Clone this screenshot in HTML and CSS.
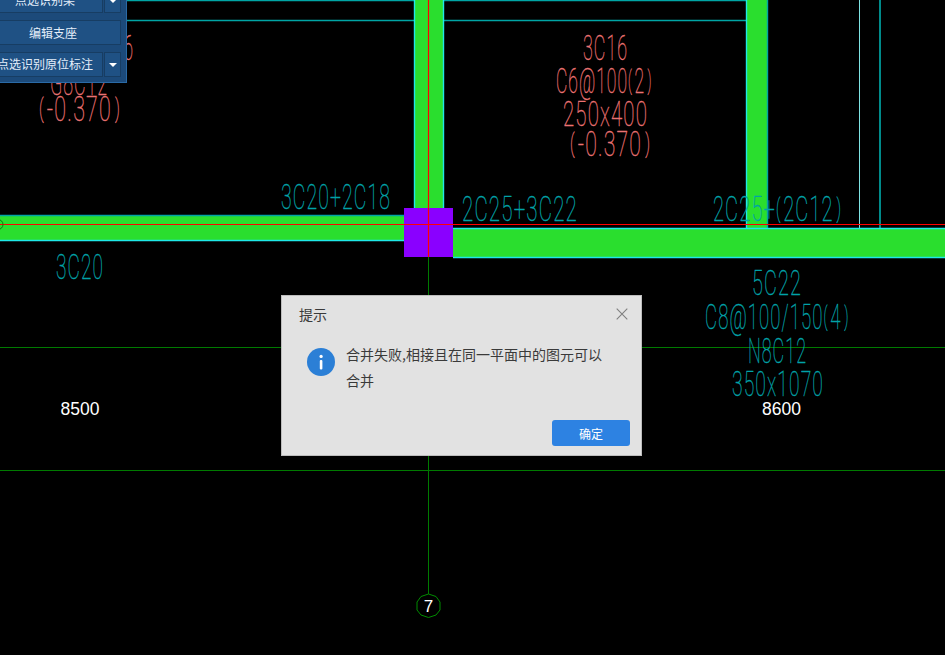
FILE: index.html
```html
<!DOCTYPE html>
<html lang="zh">
<head>
<meta charset="utf-8">
<title>提示</title>
<link rel="stylesheet" href="styles.css">
</head>
<body>
<main class="viewport">
  <svg class="cad" width="945" height="655" viewBox="0 0 945 655" xmlns="http://www.w3.org/2000/svg">
    <!-- axis lines -->
    <g class="axis">
      <line x1="0" y1="347.5" x2="945" y2="347.5"/>
      <line x1="0" y1="470.5" x2="945" y2="470.5"/>
      <line x1="428.5" y1="250" x2="428.5" y2="594"/>
    </g>
    <!-- beam outlines and fills -->
    <line class="teal2" x1="127" y1="0.5" x2="414" y2="0.5"/>
    <line class="teal2" x1="127" y1="20.5" x2="414" y2="20.5"/>
    <line class="teal2" x1="444" y1="0.5" x2="747" y2="0.5"/>
    <line class="teal2" x1="444" y1="20.5" x2="747" y2="20.5"/>
    <rect class="beam" x="414" y="0" width="29.5" height="209"/>
    <line class="cyan" x1="414.5" y1="0" x2="414.5" y2="208"/>
    <line class="cyan" x1="443.5" y1="0" x2="443.5" y2="208"/>
    <rect class="beam" x="747" y="0" width="20" height="228"/>
    <line class="cyan" x1="746.5" y1="0" x2="746.5" y2="228"/>
    <line class="teal2" x1="767.5" y1="0" x2="767.5" y2="228"/>
    <line class="pale" x1="859.5" y1="0" x2="859.5" y2="228"/>
    <line class="teal3" x1="880" y1="0" x2="880" y2="228"/>
    <rect class="beam" x="0" y="216" width="404" height="25"/>
    <line class="teal2" x1="0" y1="215.5" x2="404" y2="215.5"/>
    <line class="cyan" x1="0" y1="240.5" x2="404" y2="240.5"/>
    <rect class="beam" x="453" y="228" width="492" height="30"/>
    <line class="cyan" x1="453" y1="228.5" x2="945" y2="228.5"/>
    <line class="cyan" x1="453" y1="257.5" x2="945" y2="257.5"/>
    <rect class="column" x="404" y="208" width="49" height="49"/>
    <line class="red" x1="428.5" y1="0" x2="428.5" y2="208"/>
    <line class="red" x1="428.5" y1="208" x2="428.5" y2="257"/>
    <line class="red" x1="0" y1="224.5" x2="945" y2="224.5"/>
    <circle class="marker" cx="-2" cy="224.5" r="5"/>
    <!-- grid bubble -->
    <polygon class="bubble" points="428.5,594 436,596.5 440,602 440,610 436,615 428.5,617.5 421,615 417,610 417,602 421,596.5"/>
    <text class="label label-small" x="428.5" y="612">7</text>
    <text class="label" x="80" y="415">8500</text>
    <text class="label" x="781.5" y="415">8600</text>
    <!-- red annotations -->
    <g class="note red-note">
      <text x="583" y="60" textLength="45" lengthAdjust="spacingAndGlyphs">3C16</text>
      <text x="556" y="93" textLength="98" lengthAdjust="spacingAndGlyphs">C6@100<tspan class="paren">(</tspan>2<tspan class="paren" dx="5">)</tspan></text>
      <text x="563" y="126" textLength="85" lengthAdjust="spacingAndGlyphs">250x400</text>
      <text x="570" y="156" textLength="83" lengthAdjust="spacingAndGlyphs"><tspan class="paren">(</tspan>-0.370<tspan class="paren" dx="5">)</tspan></text>
      <text x="89" y="60" textLength="45" lengthAdjust="spacingAndGlyphs">3C16</text>
      <text x="50" y="95" textLength="58" lengthAdjust="spacingAndGlyphs">G8C12</text>
      <text x="39" y="121" textLength="84" lengthAdjust="spacingAndGlyphs"><tspan class="paren">(</tspan>-0.370<tspan class="paren" dx="5">)</tspan></text>
    </g>
    <!-- teal annotations -->
    <g class="note teal-note">
      <text x="281" y="209" textLength="110" lengthAdjust="spacingAndGlyphs">3C20+2C18</text>
      <text x="462" y="221" textLength="116" lengthAdjust="spacingAndGlyphs">2C25+3C22</text>
      <text x="713" y="221" textLength="131" lengthAdjust="spacingAndGlyphs">2C25+<tspan class="paren">(</tspan>2C12<tspan class="paren" dx="5">)</tspan></text>
      <text x="56" y="279" textLength="48" lengthAdjust="spacingAndGlyphs">3C20</text>
      <text x="752" y="295" textLength="50" lengthAdjust="spacingAndGlyphs">5C22</text>
      <text x="705" y="329" textLength="146" lengthAdjust="spacingAndGlyphs">C8@100/150<tspan class="paren">(</tspan>4<tspan class="paren" dx="5">)</tspan></text>
      <text x="748" y="363" textLength="59" lengthAdjust="spacingAndGlyphs">N8C12</text>
      <text x="732" y="396" textLength="92" lengthAdjust="spacingAndGlyphs">350x1070</text>
    </g>
  </svg>

  <aside class="toolbar">
    <div class="tool-row tool-row-clipped">
      <button class="tool-btn tool-first" type="button">点选识别梁</button>
      <button class="tool-arrow" type="button" aria-label="展开"><span class="caret"></span></button>
    </div>
    <div class="tool-row">
      <button class="tool-btn tool-center" type="button">编辑支座</button>
    </div>
    <div class="tool-row">
      <button class="tool-btn" type="button">点选识别原位标注</button>
      <button class="tool-arrow" type="button" aria-label="展开"><span class="caret"></span></button>
    </div>
  </aside>

  <section class="dialog" role="dialog">
    <header class="dialog-head">
      <h1 class="dialog-title">提示</h1>
      <svg class="dialog-close" width="12" height="12" viewBox="0 0 12 12" xmlns="http://www.w3.org/2000/svg"><path d="M.7.7l10.6 10.6M11.3.7L.7 11.3"/></svg>
    </header>
    <div class="dialog-body">
      <svg class="info" width="28" height="28" viewBox="0 0 28 28" xmlns="http://www.w3.org/2000/svg">
        <circle class="info-disc" cx="14" cy="14" r="14"/>
        <rect class="info-mark" x="12.8" y="12" width="2.6" height="9.5" rx="1"/>
        <circle class="info-mark" cx="14.1" cy="8.4" r="1.6"/>
      </svg>
      <p class="dialog-text">合并失败,相接且在同一平面中的图元可以合并</p>
    </div>
    <footer class="dialog-foot">
      <button class="dialog-ok" type="button">确定</button>
    </footer>
  </section>
</main>
</body>
</html>
```
FILE: styles.css
```css
* { box-sizing: border-box; }
html, body { margin: 0; padding: 0; background: #000; }
.viewport {
  position: relative;
  width: 945px;
  height: 655px;
  overflow: hidden;
  background: #000;
  font-family: "Noto Sans CJK SC", "Liberation Sans", sans-serif;
}
.cad { display: block; }
.axis line { stroke: #007a00; stroke-width: 1; }
.teal2 { stroke: #00a5a5; stroke-width: 1.4; }
.teal3 { stroke: #008a8a; stroke-width: 2; }
.cyan { stroke: #1fe8e8; stroke-width: 1.4; }
.pale { stroke: #7fe4e4; stroke-width: 1; }
.red { stroke: #ff0000; stroke-width: 1.2; }
.beam { fill: #2ade2e; }
.column { fill: #8a00ff; }
.marker { fill: none; stroke: #0c7a0c; stroke-width: 1; }
.bubble { fill: #000; stroke: #008c00; stroke-width: 1; }
.label {
  fill: #fff;
  font-family: "Liberation Sans", sans-serif;
  font-size: 17.5px;
  text-anchor: middle;
}
.label-small { font-size: 17px; }
.note text {
  font-family: Roboto, "Liberation Sans", sans-serif;
  font-weight: 100;
  font-size: 35px;
  letter-spacing: 2px;
}
.note .paren {
  font-size: 26px;
  baseline-shift: 4px;
  letter-spacing: 5px;
}
.red-note text { fill: #ea7272; stroke: #ea7272; stroke-width: .42px; }
.teal-note text { fill: #00a2a8; stroke: #00a2a8; stroke-width: .42px; }

.toolbar {
  position: absolute;
  left: -40px;
  top: -12px;
  width: 167px;
  height: 95px;
  padding: 0 5px 5px 5px;
  display: flex;
  flex-direction: column;
  gap: 7px;
  background: #1c4a7a;
  border: 1px solid #2a6aa6;
  border-top: 0;
}
.tool-row {
  display: flex;
  gap: 1px;
  height: 25px;
}
.tool-btn, .tool-arrow {
  height: 100%;
  padding: 0;
  background: #1f5184;
  border: 1px solid #173d63;
  color: #e4eefa;
  font: 12px "Noto Sans CJK SC", "Liberation Sans", sans-serif;
}
.tool-btn { flex: 1; text-align: right; padding: 0 9px 2px 0; white-space: nowrap; }
.tool-first { padding-right: 27px; }
.tool-center { text-align: center; padding: 0 0 0 19px; }
.tool-arrow {
  width: 17px;
  display: flex;
  align-items: center;
  justify-content: center;
}
.caret {
  width: 0;
  height: 0;
  border-left: 4px solid transparent;
  border-right: 4px solid transparent;
  border-top: 4px solid #fff;
}

.dialog {
  position: absolute;
  left: 281px;
  top: 295px;
  width: 361px;
  height: 161px;
  display: flex;
  flex-direction: column;
  background: #e2e2e2;
  border: 1px solid #bdbdbd;
  color: #3a3a3a;
}
.dialog-head {
  display: flex;
  justify-content: space-between;
  align-items: center;
  padding: 4px 13px 0 17px;
  height: 32px;
}
.dialog-title {
  margin: 0;
  font-size: 14px;
  font-weight: 400;
  line-height: 20px;
}
.dialog-close { fill: none; stroke: #7f7f7f; stroke-width: 1.1; }
.dialog-body {
  display: flex;
  align-items: flex-start;
  gap: 11px;
  padding: 19px 36px 0 25px;
  flex: 1;
}
.info { flex: none; margin-top: 1px; }
.info-disc { fill: #2b7fd6; }
.info-mark { fill: #fff; }
.dialog-text {
  margin: 0;
  font-size: 14px;
  line-height: 26px;
  margin-top: -6px;
}
.dialog-foot {
  display: flex;
  justify-content: flex-end;
  padding: 0 11px 9px 0;
}
.dialog-ok {
  width: 78px;
  height: 26px;
  padding: 0;
  border: 0;
  border-radius: 3px;
  background: #2d82e2;
  color: #fff;
  font: 12px "Noto Sans CJK SC", "Liberation Sans", sans-serif;
}
```
